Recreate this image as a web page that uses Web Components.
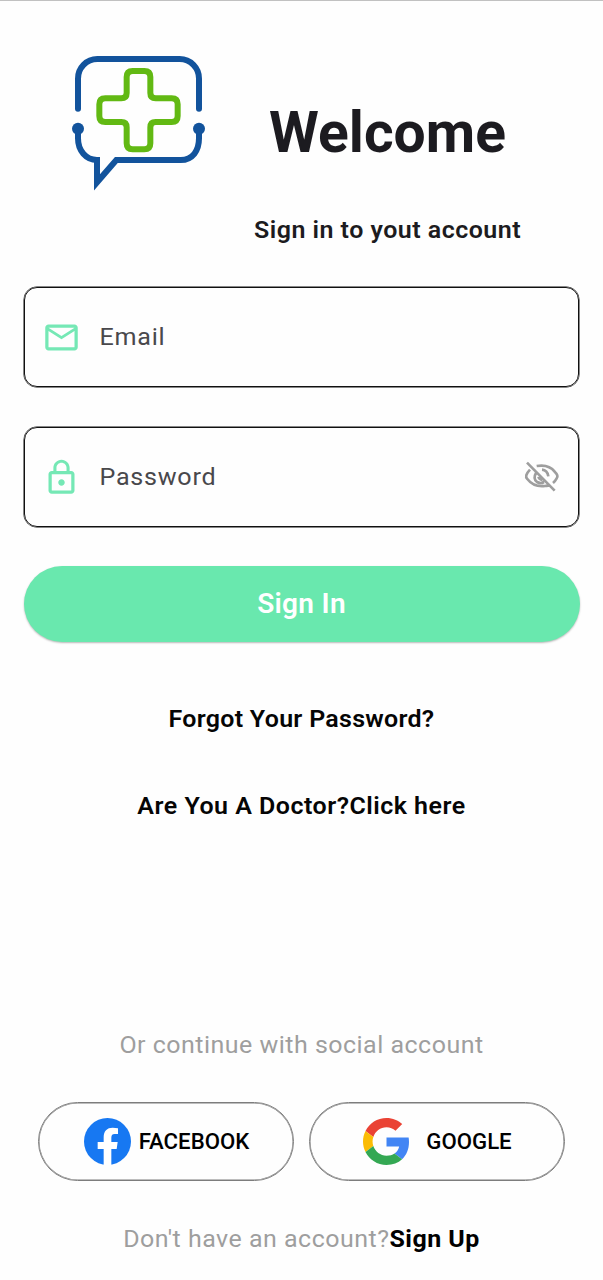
<!DOCTYPE html>
<html lang="en">
<head>
<meta charset="utf-8">
<title>Welcome</title>
<style>
  body { margin: 0; background: #fefefe; font-family: Roboto, "Liberation Sans", sans-serif; }
</style>
</head>
<body>
<login-screen></login-screen>
<script>
const define = (name, html) => customElements.define(name, class extends HTMLElement {
  constructor() {
    super();
    this.attachShadow({ mode: "open" }).innerHTML = html;
  }
});

define("clinic-logo", `
<style>:host{display:block;width:160px;height:155px} svg{display:block}</style>
<svg width="160" height="155" viewBox="0 0 480 465" fill="none">
  <g stroke="#12539c" stroke-width="18">
    <path stroke-linecap="round" d="M54 191V101A58 58 0 0 1 112 42H359A58 58 0 0 1 417 101V191"/>
    <path d="M54 252V280C54 317 78 345 111 345V412L169 345H362C398 345 417 317 417 280V252"/>
  </g>
  <g fill="#12539c"><circle cx="54" cy="251" r="18"/><circle cx="417" cy="251" r="18"/></g>
  <path stroke="#62b913" stroke-width="18" d="M218 78H253Q271 78 271 96V144Q271 160 287 160H335Q353 160 353 178V213Q353 231 335 231H287Q271 231 271 247V295Q271 313 253 313H218Q200 313 200 295V247Q200 231 184 231H136Q118 231 118 213V178Q118 160 136 160H184Q200 160 200 144V96Q200 78 218 78Z"/>
</svg>`);

define("screen-header", `
<style>
  :host{display:flex;padding:44px 0 0 60px;height:242px;box-sizing:border-box}
  .titles{width:335px;display:flex;flex-direction:column;align-items:center;padding-top:55px;color:#1c1b20}
  h1{margin:0;font-size:57px;line-height:66px;font-weight:700}
  p{margin:50px 0 0;font-size:25px;line-height:28px;font-weight:600;letter-spacing:.47px;white-space:nowrap;transform:scaleY(.96)}
</style>
<clinic-logo></clinic-logo>
<div class="titles"><h1><slot name="title"></slot></h1><p><slot name="subtitle"></slot></p></div>`);

define("text-field", `
<style>
  :host{display:flex;align-items:center;height:100px;box-sizing:border-box;border:1px solid #111;box-shadow:0 0 0 .5px #111;border-radius:13px;padding:0 16px 0 16.5px}
  .label{flex:1;margin-left:19px;font-size:25.1px;letter-spacing:.75px;line-height:30px;color:#49484c;transform:scaleY(.96)}
  ::slotted(svg){display:block;flex:none}
</style>
<slot name="lead"></slot><span class="label"><slot></slot></span><slot name="trail"></slot>`);

define("primary-button", `
<style>
  :host{display:flex;align-items:center;justify-content:center;height:76px;box-sizing:border-box;padding-bottom:2px;margin:-1px -.5px 0;border-radius:38px;background:#69e8ae;color:#fff;font-size:28px;font-weight:600;letter-spacing:.3px;box-shadow:0 1px 2px rgba(0,0,0,.28)}
  span{transform:scaleY(.96)}
</style><span><slot></slot></span>`);

define("text-line", `
<style>
  :host{display:flex;justify-content:center;font-size:25px;line-height:30px;letter-spacing:.48px;white-space:nowrap;color:#9e9e9e;transform:scaleY(.96)}
  :host([strong]){color:#050505;font-weight:600}
  ::slotted(b){color:#000;font-weight:700}
</style><slot></slot>`);

define("social-button", `
<style>
  :host{display:flex;align-items:center;justify-content:center;box-sizing:border-box;width:256px;height:79px;border:1px solid #7d7d7d;box-shadow:inset 0 0 0 .5px #7d7d7d;border-radius:40px;font-size:22.2px;font-weight:500;color:#000;gap:var(--gap);padding-left:1px}
  span{padding-bottom:1px;transform:scaleY(.97)}
  ::slotted(svg){display:block;flex:none}
</style><slot name="icon"></slot><span><slot></slot></span>`);

define("login-screen", `
<style>
  :host{display:block;box-sizing:border-box;height:1280px;border-top:1px solid #c1c1c1;overflow:hidden}
  .form{display:flex;flex-direction:column;margin:44px 24px 0;gap:40px}
  .links{display:flex;flex-direction:column;gap:57px;margin-top:62px}
  .links text-line:first-child{letter-spacing:.28px}
  .social-title{margin-top:209px}
  .social{display:flex;justify-content:center;gap:15px;margin-top:42px}
  .signup{margin-top:43px}
</style>
<screen-header><span slot="title">Welcome</span><span slot="subtitle">Sign in to yout account</span></screen-header>
<div class="form">
  <text-field>Email
    <svg slot="lead" width="39" height="39" viewBox="0 0 24 24" fill="#75e8b5"><path d="M22 6c0-1.100-.9-2-2-2H4c-1.100 0-2 .9-2 2v12c0 1.100.9 2 2 2h16c1.100 0 2-.9 2-2V6zm-2 0-8 5-8-5h16zm0 12H4V8l8 5 8-5v10z"/></svg>
  </text-field>
  <text-field>Password
    <svg slot="lead" width="39" height="39" viewBox="0 0 24 24" fill="#75e8b5"><path d="M12 17c1.100 0 2-.9 2-2s-.9-2-2-2-2 .9-2 2 .9 2 2 2zm6-9h-1V6c0-2.760-2.240-5-5-5S7 3.240 7 6v2H6c-1.100 0-2 .9-2 2v10c0 1.100.9 2 2 2h12c1.100 0 2-.9 2-2V10c0-1.100-.9-2-2-2zM8.900 6c0-1.710 1.390-3.100 3.100-3.100s3.100 1.390 3.100 3.100v2H8.900V6zM18 20H6V10h12v10z"/></svg>
    <svg slot="trail" width="40" height="40" viewBox="0 0 120 120" fill="none" stroke="#9e9e9e" stroke-width="8"><path d="M15 17L98 101M44 27Q81 21 98 44Q111 56 104 64Q99 73 93 78M24 38Q6 57 16 66Q35 91 69 87Q75 87 80 84M42 48Q32 65 45 75Q56 81 66 75M60 38Q76 39 79 58"/><path stroke-width="9" d="M50 59Q51 66 62 68"/></svg>
  </text-field>
  <primary-button>Sign In</primary-button>
</div>
<div class="links">
  <text-line strong>Forgot Your Password?</text-line>
  <text-line strong><span>Are You A Doctor?</span><span>Click here</span></text-line>
</div>
<text-line class="social-title">Or continue with social account</text-line>
<div class="social">
  <social-button style="--gap:8px">FACEBOOK
    <svg slot="icon" width="47" height="47" viewBox="0 0 141 141"><circle cx="70.500" cy="70.500" r="70.500" fill="#1778f2"/><path fill="#fff" d="M59 141V93H41V72H59V58C59 39 69 29 86 29Q94 29 102 31V48H92C84 48 82 53 82 60V72H101L98 93H82V141Z"/></svg>
  </social-button>
  <social-button style="--gap:16px">GOOGLE
    <svg slot="icon" width="47" height="47" viewBox="0 0 48 48"><path fill="#ea4335" d="M24 9.500c3.540 0 6.710 1.220 9.210 3.600l6.850-6.850C35.900 2.380 30.470 0 24 0 14.620 0 6.510 5.380 2.560 13.220l7.980 6.190C12.430 13.720 17.740 9.500 24 9.500z"/><path fill="#4285f4" d="M46.980 24.550c0-1.570-.15-3.090-.38-4.550H24v9.020h12.940c-.58 2.960-2.260 5.480-4.780 7.180l7.730 6c4.510-4.180 7.090-10.360 7.090-17.650z"/><path fill="#fbbc05" d="M10.530 28.590c-.48-1.450-.76-2.990-.76-4.590s.27-3.140.76-4.590l-7.980-6.190C.92 16.460 0 20.120 0 24c0 3.880.92 7.540 2.560 10.780l7.970-6.190z"/><path fill="#34a853" d="M24 48c6.480 0 11.930-2.130 15.890-5.810l-7.730-6c-2.150 1.450-4.920 2.300-8.160 2.300-6.260 0-11.570-4.220-13.470-9.910l-7.980 6.190C6.510 42.620 14.620 48 24 48z"/></svg>
  </social-button>
</div>
<text-line class="signup"><span>Don't have an account?</span><b>Sign Up</b></text-line>`);
</script>
</body>
</html>
